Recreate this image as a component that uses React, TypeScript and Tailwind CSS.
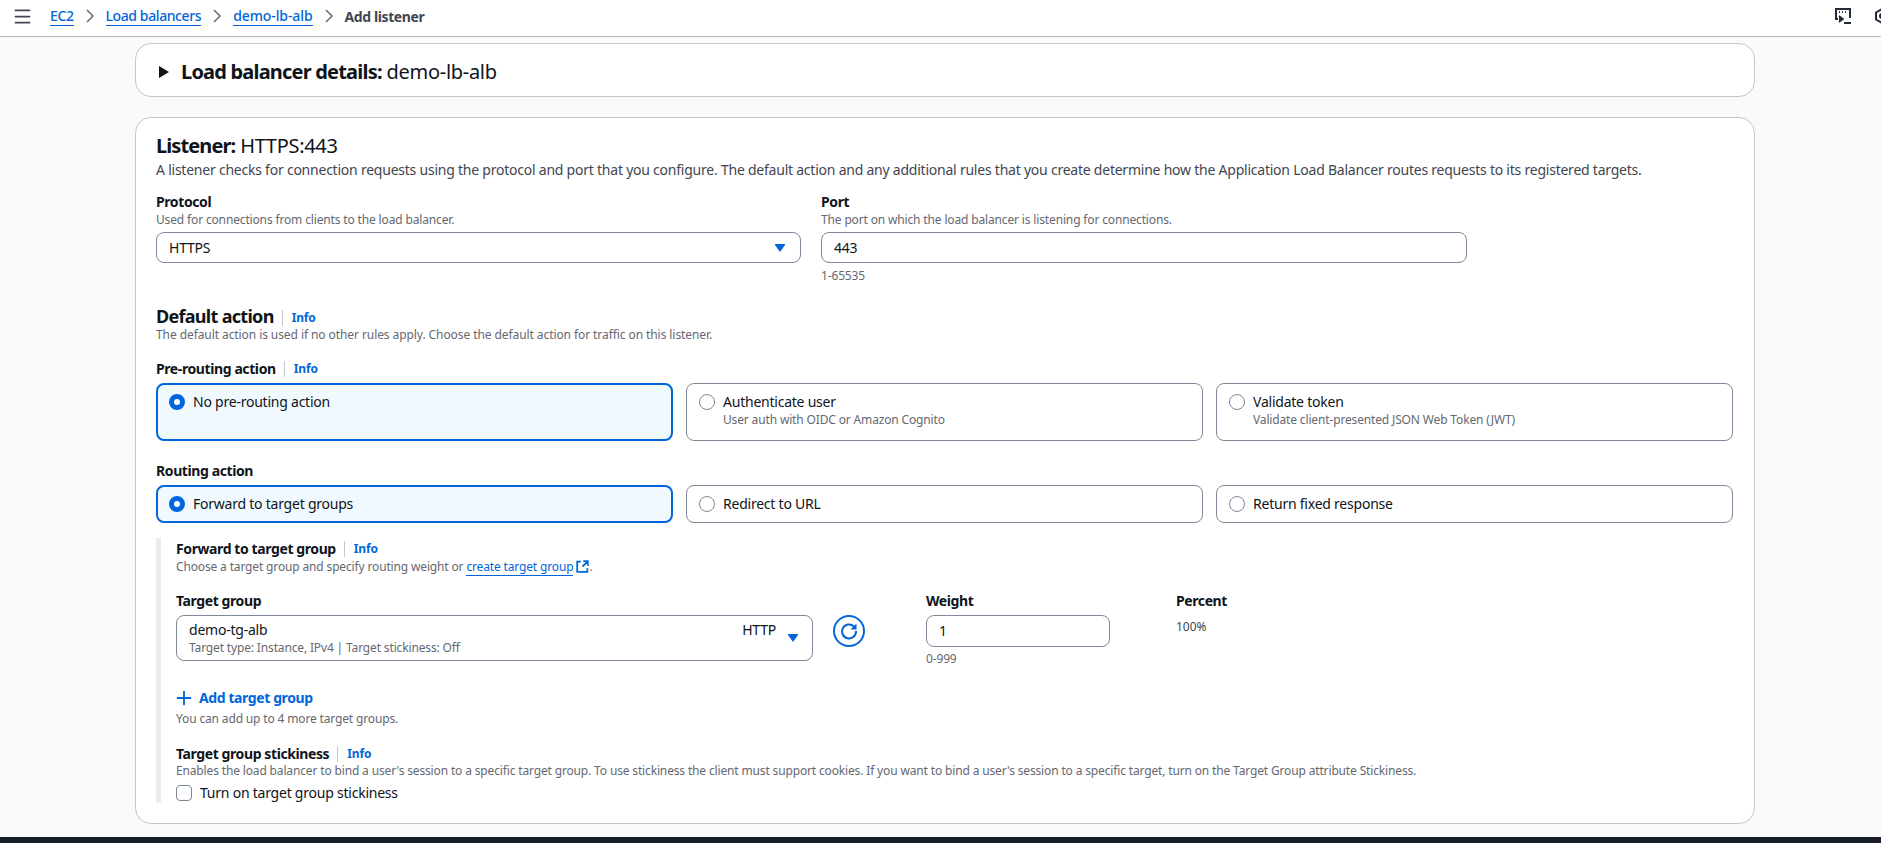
import React from "react";
import { Menu, Plus } from "lucide-react";

// shared text styles
const body = "text-[14px] leading-[20px] tracking-[-0.23px]";
const label = "text-[14px] leading-[20px] tracking-[-0.4px] font-bold";
const hint = "text-[12px] leading-[16px] tracking-[-0.15px] text-[#656871]";

const Info = () => (
  <a className="text-[12px] leading-[16px] tracking-[-0.15px] font-bold text-[#0066d9] border-l border-[#c6c6cd] ml-[8px] pl-[9px]">Info</a>
);

const Caret = () => (
  <svg width="10" height="8" viewBox="0 0 10 8" className="shrink-0">
    <path d="M0 0h10v1L5 8 0 1z" fill="#0066d9" />
  </svg>
);

const Chevron = () => (
  <svg width="8" height="14" viewBox="0 0 8 14" fill="none" stroke="#656871" strokeWidth="1.5" className="mx-[12px]">
    <path d="M1 1l6 6-6 6" />
  </svg>
);

const Tile = ({ title, sub, selected, tall }: { title: string; sub?: string; selected?: boolean; tall?: boolean }) => (
  <div
    className={`flex-1 flex gap-[8px] rounded-[8px] ${tall ? "h-[58px]" : "h-[38px]"} ${
      selected ? "border-2 border-[#0066d9] bg-[#f0fafe] px-[11px] py-[7px]" : "border border-[#7d8998] bg-white px-[12px] py-[8px]"
    }`}
  >
    {selected ? (
      <span className="mt-[2px] w-[16px] h-[16px] rounded-full border-[5px] border-[#0066d9] bg-white shrink-0" />
    ) : (
      <span className="mt-[2px] w-[16px] h-[16px] rounded-full border border-[#7d8998] bg-white shrink-0" />
    )}
    <div>
      <div className={`${body} text-[#0f141a]`}>{title}</div>
      {sub && <div className={hint}>{sub}</div>}
    </div>
  </div>
);

export default function App() {
  return (
    <div className="w-[1881px] h-[843px] overflow-hidden flex flex-col bg-[#fafafa] font-['Noto_Sans',sans-serif] text-[#0f141a]">
      <header className="h-[37px] shrink-0 bg-white border-b border-[#b4b4bb] flex items-center pl-[12px] pb-[4px] overflow-hidden">
        <Menu size={21} strokeWidth={2} className="text-[#424650]" />
        <nav className="flex items-center ml-[17px] text-[14px] tracking-[-0.4px] font-medium">
          <a className="text-[#0066d9] border-b border-[#0066d9] leading-[18px]">EC2</a>
          <Chevron />
          <a className="text-[#0066d9] border-b border-[#0066d9] leading-[18px]">Load balancers</a>
          <Chevron />
          <a className="text-[#0066d9] border-b border-[#0066d9] leading-[18px] tracking-[-0.1px]">demo-lb-alb</a>
          <Chevron />
          <span className="font-bold text-[#424650]">Add listener</span>
        </nav>
        <div className="ml-auto flex items-center shrink-0 w-[46px] gap-[23px] text-[#232b37]">
          <svg width="16" height="16" viewBox="0 0 16 16" fill="none" stroke="currentColor" strokeWidth="2" className="shrink-0">
            <path d="M3 11H1V1h14v9" />
            <path d="M4 4h1M7 4h1M10 4h1" />
            <path d="M4 8l4 3-4 3" strokeWidth="1.6" fill="currentColor" />
            <path d="M9 15h7" />
          </svg>
          <svg width="16" height="16" viewBox="0 0 16 16" fill="none" stroke="currentColor" strokeWidth="2" className="shrink-0">
            <path d="M8 1l6 3.5v7L8 15l-6-3.5v-7z" />
            <circle cx="8" cy="8" r="2" />
          </svg>
        </div>
      </header>

      <main className="flex-1 w-[1620px] ml-[135px] pt-[6px]">
        <section className="h-[54px] bg-white border border-[#c6c6cd] rounded-[16px] flex items-center pl-[23px] pt-[3px]">
          <svg width="10" height="12" viewBox="0 0 10 12" className="mr-[12px]">
            <path d="M0 0l10 6-10 6z" fill="#0f141a" />
          </svg>
          <h2 className="text-[20px] tracking-[-0.3px]"><b className="tracking-[-0.8px]">Load balancer details:</b> demo-lb-alb</h2>
        </section>

        <section className="h-[707px] mt-[20px] bg-white border border-[#c6c6cd] rounded-[16px] pl-[20px] pr-[21px] pt-[16px]">
          <h2 className="text-[20px] leading-[24px] tracking-[-0.3px]"><b className="tracking-[-0.9px]">Listener:</b> HTTPS:443</h2>
          <p className={`${body} mt-[2px] text-[#424650]`}>
            A listener checks for connection requests using the protocol and port that you configure. The default action and any additional rules that you create determine how the Application Load Balancer routes requests to its registered targets.
          </p>

          <div className="flex gap-[20px] mt-[12px]">
            <div className="w-[645px]">
              <div className={label}>Protocol</div>
              <div className={hint}>Used for connections from clients to the load balancer.</div>
              <div className={`${body} mt-[4px] h-[31px] border border-[#7d8998] rounded-[8px] flex items-center justify-between pl-[12px] pr-[15px]`}>
                HTTPS <Caret />
              </div>
            </div>
            <div className="w-[646px]">
              <div className={label}>Port</div>
              <div className={hint}>The port on which the load balancer is listening for connections.</div>
              <div className={`${body} mt-[4px] h-[31px] border border-[#7d8998] rounded-[8px] flex items-center pl-[12px]`}>443</div>
              <div className={`${hint} mt-[5px]`}>1-65535</div>
            </div>
          </div>

          <div className="mt-[21px] flex items-center">
            <h3 className="text-[18px] leading-[22px] tracking-[-0.7px] font-bold">Default action</h3>
            <span className="mt-[3px] flex"><Info /></span>
          </div>
          <p className="text-[12px] leading-[16px] tracking-[-0.08px] text-[#656871]">The default action is used if no other rules apply. Choose the default action for traffic on this listener.</p>

          <div className="mt-[16px] flex items-center">
            <span className={label}>Pre-routing action</span>
            <Info />
          </div>
          <div className="flex gap-[13px] mt-[4px]">
            <Tile tall selected title="No pre-routing action" />
            <Tile tall title="Authenticate user" sub="User auth with OIDC or Amazon Cognito" />
            <Tile tall title="Validate token" sub="Validate client-presented JSON Web Token (JWT)" />
          </div>

          <div className={`mt-[20px] ${label}`}>Routing action</div>
          <div className="flex gap-[13px] mt-[4px]">
            <Tile selected title="Forward to target groups" />
            <Tile title="Redirect to URL" />
            <Tile title="Return fixed response" />
          </div>

          <div className="mt-[15px] border-l-[5px] border-[#ebebf0] pl-[15px] h-[265px]">
            <div className="flex items-center pt-[1px]">
              <span className={label}>Forward to target group</span>
              <Info />
            </div>
            <p className={hint}>
              Choose a target group and specify routing weight or{" "}
              <a className="text-[#0066d9] border-b border-[#0066d9]">create target group</a>
              <svg width="13" height="13" viewBox="0 0 16 16" fill="none" stroke="#0066d9" strokeWidth="2.2" className="inline ml-[3px] align-[-2px]">
                <path d="M6 2H1.5v12.5H14V10M8 8l6-6M9 1.5h5.5V7" />
              </svg>
              .
            </p>

            <div className="flex mt-[16px]">
              <div className="w-[637px]">
                <div className={label}>Target group</div>
                <div className="mt-[4px] h-[46px] border border-[#7d8998] rounded-[8px] flex justify-between pl-[12px] pr-[14px] pt-[4px]">
                  <div>
                    <div className={body}>demo-tg-alb</div>
                    <div className={hint}>Target type: Instance, IPv4 | Target stickiness: Off</div>
                  </div>
                  <div className="flex gap-[12px]">
                    <span className={body}>HTTP</span>
                    <span className="mt-[14px]"><Caret /></span>
                  </div>
                </div>
              </div>
              <div className="w-[113px] pl-[20px] pt-[24px]">
                <svg width="32" height="32" viewBox="0 0 32 32" fill="none" stroke="#0066d9" strokeWidth="2">
                  <circle cx="16" cy="16" r="15" />
                  <path d="M21 11.5A7 7 0 1 0 23 16" />
                  <path d="M23.5 8.5v6h-6z" fill="#0066d9" stroke="none" />
                </svg>
              </div>
              <div className="w-[250px]">
                <div className={label}>Weight</div>
                <div className={`${body} mt-[4px] w-[184px] h-[32px] border border-[#7d8998] rounded-[8px] flex items-center pl-[12px]`}>1</div>
                <div className={`${hint} mt-[4px]`}>0-999</div>
              </div>
              <div>
                <div className={label}>Percent</div>
                <div className="mt-[8px] text-[12px] leading-[16px] text-[#424650]">100%</div>
              </div>
            </div>

            <div className={`${label} flex items-center mt-[20px] text-[#0066d9]`}>
              <Plus size={22} strokeWidth={2} className="ml-[-3px] mr-[4px]" /> Add target group
            </div>
            <p className={`${hint} mt-[2px]`}>You can add up to 4 more target groups.</p>

            <div className="mt-[17px] flex items-center">
              <span className={label}>Target group stickiness</span>
              <Info />
            </div>
            <p className={`${hint} mt-[-1px]`}>
              Enables the load balancer to bind a user's session to a specific target group. To use stickiness the client must support cookies. If you want to bind a user's session to a specific target, turn on the Target Group attribute Stickiness.
            </p>
            <label className={`${body} mt-[4px] flex items-center gap-[8px]`}>
              <span className="w-[16px] h-[16px] border border-[#7d8998] rounded-[4px]" />
              Turn on target group stickiness
            </label>
          </div>
        </section>
      </main>

      <footer className="h-[6px] shrink-0 bg-[#161d26]" />
    </div>
  );
}
